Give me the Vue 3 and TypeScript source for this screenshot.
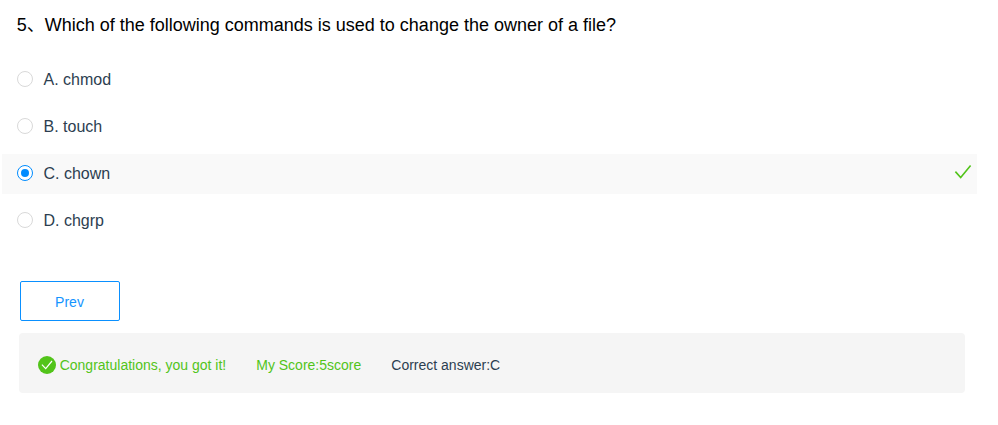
<script setup lang="ts">
import { ref } from 'vue'

interface Option {
  key: string
  text: string
}

const options: Option[] = [
  { key: 'A', text: 'chmod' },
  { key: 'B', text: 'touch' },
  { key: 'C', text: 'chown' },
  { key: 'D', text: 'chgrp' },
]
const selected = ref('C')
const answer = 'C'
</script>

<template>
  <main class="quiz">
    <h1 class="title">5、Which of the following commands is used to change the owner of a file?</h1>
    <div class="options">
      <label v-for="o in options" :key="o.key" class="option" :class="{ active: o.key === selected }">
        <input v-model="selected" class="native" type="radio" name="answer" :value="o.key" />
        <span class="radio"></span>
        <span class="text">{{ o.key }}. {{ o.text }}</span>
        <svg v-if="o.key === answer" class="tick" viewBox="0 0 18 16">
          <path d="M1.4 7.6 6.7 13.5 16.6 1.6" />
        </svg>
      </label>
    </div>
    <button class="prev" type="button">Prev</button>
    <section class="result">
      <svg class="badge" viewBox="0 0 18 18">
        <circle cx="9" cy="9" r="9" />
        <path d="M3.9 8.6 7.7 12.7 14 5" />
      </svg>
      <span class="good congrats">Congratulations, you got it!</span>
      <span class="good score">My Score:5score</span>
      <span class="correct">Correct answer:{{ answer }}</span>
    </section>
  </main>
</template>

<style>
body {
  background: #fff;
}
</style>

<style scoped>
.quiz {
  box-sizing: border-box;
  height: 425px;
  padding: 10px 21px 0 2px;
  color: #2c3e50;
  font-family: "Liberation Sans", "Noto Sans CJK SC", sans-serif;
}
.title {
  margin: 0 0 20px 14.7px;
  height: 30px;
  line-height: 30px;
  font-size: 18px;
  font-weight: 400;
  color: #000;
  white-space: nowrap;
}
.options {
  display: flex;
  flex-direction: column;
  gap: 7px;
}
.option {
  box-sizing: border-box;
  display: flex;
  align-items: center;
  height: 40px;
  padding: 0 5px 2px 15px;
  font-size: 16px;
  cursor: pointer;
}
.option.active {
  background: #f9f9f9;
}
.native {
  appearance: none;
  width: 0;
  height: 0;
  margin: 0;
}
.radio {
  box-sizing: border-box;
  display: flex;
  align-items: center;
  justify-content: center;
  width: 16px;
  height: 16px;
  border: 1px solid #d9d9d9;
  border-radius: 50%;
  background: #fff;
}
.active .radio {
  border-color: #008cff;
}
.active .radio::after {
  content: "";
  width: 8px;
  height: 8px;
  border-radius: 50%;
  background: #008cff;
}
.text {
  padding-top: 1px;
  margin-left: 10.5px;
  line-height: 24px;
}
.tick {
  width: 18px;
  height: 16px;
  margin: 0 0 2px auto;
  fill: none;
  stroke: #52c41a;
  stroke-width: 1.6;
}
.prev {
  display: block;
  box-sizing: border-box;
  width: 100px;
  height: 40px;
  margin: 40px 0 0 18px;
  padding: 2px 1px 0 0;
  border: 1px solid #0a90ff;
  border-radius: 2px;
  background: #fff;
  color: #1494ff;
  font: 14px "Liberation Sans", sans-serif;
}
.result {
  display: flex;
  align-items: center;
  box-sizing: border-box;
  height: 60px;
  margin: 12px 12px 0 17px;
  padding: 4px 19px 0;
  border-radius: 4px;
  background: #f5f5f5;
  font-size: 14px;
}
.badge {
  width: 18px;
  height: 18px;
  margin-right: 3.7px;
  fill: #52c41a;
}
.badge path {
  fill: none;
  stroke: #fff;
  stroke-width: 1.2;
}
.good {
  margin-right: 30px;
  color: #52c41a;
}
</style>
